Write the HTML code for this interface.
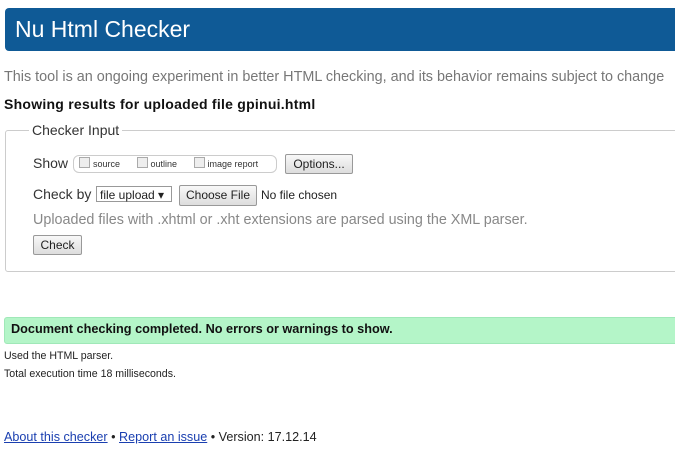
<!DOCTYPE html>
<html><head><style>
body{margin:0;width:675px;height:453px;overflow:hidden;background:#fff;font-family:"Liberation Sans",Arial,sans-serif;color:#222;position:relative}
.a{position:absolute;white-space:nowrap}
.hdr{left:5px;top:8px;width:690px;height:43px;background:#0f5a96;border-radius:4px}
.hdr span{position:absolute;left:10px;top:8px;color:#fff;font-size:23px}
.fs{left:5px;top:130px;width:690px;height:140px;border:1px solid #ccc;border-radius:3px}
.btn{position:absolute;border:1px solid #999;background:linear-gradient(#f8f8f8,#ddd);font-size:12px;border-radius:2px;text-align:center}
.cb{display:inline-block;width:9px;height:9px;border:1px solid #aaa;background:#eee;vertical-align:-1px;margin:0 3px 0 5px}
</style></head><body>
<div class="a hdr"><span>Nu Html Checker</span></div>
<div class="a" style="left:4px;top:69px;font-size:14.4px;color:#777">This tool is an ongoing experiment in better HTML checking, and its behavior remains subject to change</div>
<div class="a" style="left:4px;top:96px;font-size:14px;font-weight:bold;color:#111;letter-spacing:0.25px">Showing results for uploaded file gpinui.html</div>
<div class="a fs"></div>
<div class="a" style="left:29px;top:122px;font-size:14px;background:#fff;padding:0 3px;color:#333">Checker Input</div>
<div class="a" style="left:33px;top:155px;font-size:14px;color:#333">Show</div>
<div class="a" style="left:73px;top:155px;width:202px;height:16px;border:1px solid #ccc;border-radius:6px;font-size:9px;color:#333;line-height:16px"><span class="cb"></span>source <span class="cb" style="margin-left:14px"></span>outline <span class="cb" style="margin-left:14px"></span>image report</div>
<div class="btn" style="left:285px;top:154px;width:66px;height:18px;line-height:18px">Options...</div>
<div class="a" style="left:33px;top:186px;font-size:14px;color:#333">Check by</div>
<div class="a" style="left:96px;top:186px;width:76px;height:16px;border:1px solid #999;font-size:12px;line-height:16px;padding-left:3px;box-sizing:border-box">file upload ▾</div>
<div class="btn" style="left:179px;top:185px;width:76px;height:19px;line-height:19px">Choose File</div>
<div class="a" style="left:261px;top:188px;font-size:12px;color:#222">No file chosen</div>
<div class="a" style="left:33px;top:212px;font-size:14.35px;color:#888">Uploaded files with .xhtml or .xht extensions are parsed using the XML parser.</div>
<div class="btn" style="left:33px;top:235px;width:47px;height:18px;line-height:18px">Check</div>
<div class="a" style="left:4px;top:317px;width:690px;height:25px;background:#b4f5c8;border:1px solid #a0e8b8;border-radius:3px"></div>
<div class="a" style="left:11px;top:322px;font-size:12.7px;font-weight:bold;color:#111">Document checking completed. No errors or warnings to show.</div>
<div class="a" style="left:4px;top:350px;font-size:10.6px;color:#222">Used the HTML parser.</div>
<div class="a" style="left:4px;top:368px;font-size:10.6px;color:#222">Total execution time 18 milliseconds.</div>
<div class="a" style="left:4px;top:430px;font-size:12.6px;color:#222"><span style="color:#1a3fb0;text-decoration:underline">About this checker</span> • <span style="color:#1a3fb0;text-decoration:underline">Report an issue</span> • Version: 17.12.14</div>
</body></html>
